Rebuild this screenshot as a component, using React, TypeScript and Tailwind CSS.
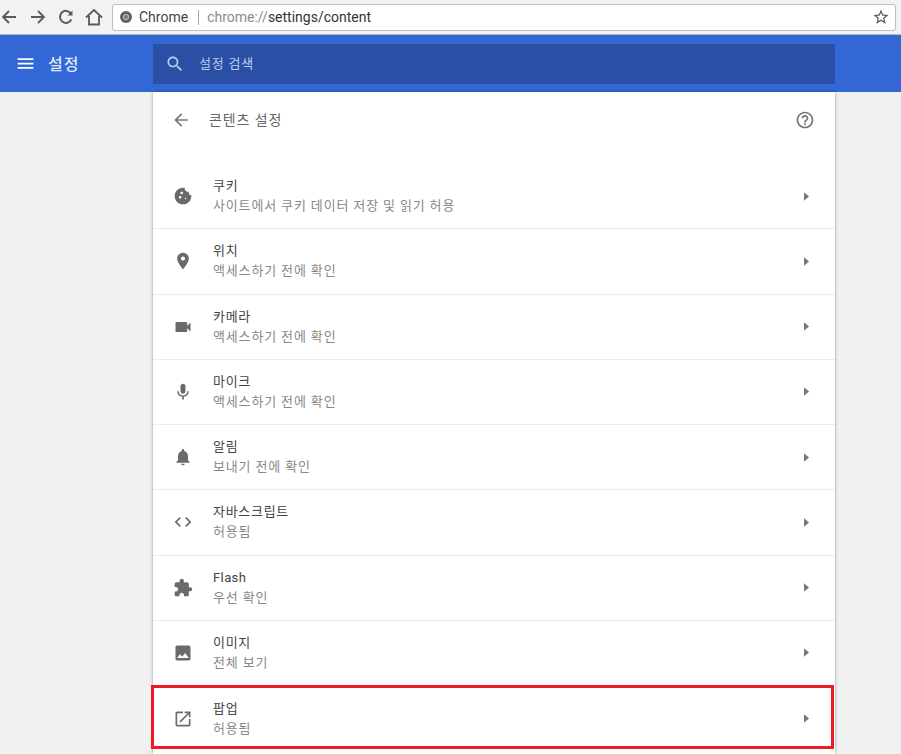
const FONT = "font-['Roboto','Noto_Sans_CJK_KR',sans-serif]";

const PATHS = {
  menu: "M3 18h18v-2H3v2zm0-5h18v-2H3v2zm0-7v2h18V6H3z",
  search:
    "M15.5 14h-.79l-.28-.27C15.41 12.59 16 11.11 16 9.5 16 5.91 13.09 3 9.5 3S3 5.91 3 9.5 5.91 16 9.5 16c1.61 0 3.09-.59 4.23-1.57l.27.28v.79l5 4.99L20.49 19l-4.99-5zm-6 0C7.01 14 5 11.99 5 9.5S7.01 5 9.5 5 14 7.01 14 9.5 11.99 14 9.5 14z",
  back: "M20 11H7.83l5.59-5.59L12 4l-8 8 8 8 1.41-1.41L7.83 13H20v-2z",
  help: "M11 18h2v-2h-2v2zm1-16C6.48 2 2 6.48 2 12s4.48 10 10 10 10-4.48 10-10S17.52 2 12 2zm0 18c-4.41 0-8-3.59-8-8s3.59-8 8-8 8 3.59 8 8-3.59 8-8 8zm0-14c-2.21 0-4 1.79-4 4h2c0-1.1.9-2 2-2s2 .9 2 2c0 2-3 1.75-3 5h2c0-2.25 3-2.5 3-5 0-2.21-1.79-4-4-4z",
  cookie:
    "M21.95 10.99c-1.79-.03-3.7-1.95-2.68-4.22-2.97 1-5.78-1.59-5.19-4.56C7.11.74 2 6.41 2 12c0 5.52 4.48 10 10 10 5.89 0 10.54-5.08 9.95-11.01zM8.5 15c-.83 0-1.5-.67-1.5-1.5S7.67 12 8.5 12s1.5.67 1.5 1.5S9.33 15 8.5 15zm2-5C9.67 10 9 9.33 9 8.5S9.67 7 10.5 7s1.5.67 1.5 1.5-.67 1.5-1.5 1.5zm4.5 6c-.55 0-1-.45-1-1s.45-1 1-1 1 .45 1 1-.45 1-1 1z",
  location:
    "M12 2C8.13 2 5 5.13 5 9c0 5.25 7 13 7 13s7-7.75 7-13c0-3.87-3.13-7-7-7zm0 9.5c-1.38 0-2.5-1.12-2.5-2.5s1.12-2.5 2.5-2.5 2.5 1.12 2.5 2.5-1.12 2.5-2.5 2.5z",
  camera:
    "M17 10.5V7c0-.55-.45-1-1-1H4c-.55 0-1 .45-1 1v10c0 .55.45 1 1 1h12c.55 0 1-.45 1-1v-3.5l4 4v-11l-4 4z",
  mic: "M12 14c1.66 0 2.99-1.34 2.99-3L15 5c0-1.66-1.34-3-3-3S9 3.34 9 5v6c0 1.66 1.34 3 3 3zm5.3-3c0 3-2.54 5.1-5.3 5.1S6.7 14 6.7 11H5c0 3.41 2.72 6.23 6 6.72V21h2v-3.28c3.28-.48 6-3.3 6-6.72h-1.7z",
  bell: "M12 22c1.1 0 2-.9 2-2h-4c0 1.1.89 2 2 2zm6-6v-5c0-3.07-1.64-5.64-4.5-6.32V4c0-.83-.67-1.5-1.5-1.5s-1.5.67-1.5 1.5v.68C7.63 5.36 6 7.92 6 11v5l-2 2v1h16v-1l-2-2z",
  code: "M9.4 16.6L4.8 12l4.6-4.6L8 6l-6 6 6 6 1.4-1.4zm5.2 0l4.6-4.6-4.6-4.6L16 6l6 6-6 6-1.4-1.4z",
  puzzle:
    "M20.5 11H19V7c0-1.1-.9-2-2-2h-4V3.5C13 2.12 11.88 1 10.5 1S8 2.12 8 3.5V5H4c-1.1 0-1.99.9-1.99 2v3.8H3.5c1.49 0 2.7 1.21 2.7 2.7s-1.21 2.7-2.7 2.7H2V20c0 1.1.9 2 2 2h3.8v-1.5c0-1.49 1.21-2.7 2.7-2.7 1.49 0 2.7 1.21 2.7 2.7V22H17c1.1 0 2-.9 2-2v-4h1.5c1.38 0 2.5-1.12 2.5-2.5S21.88 11 20.5 11z",
  image:
    "M21 19V5c0-1.1-.9-2-2-2H5c-1.1 0-2 .9-2 2v14c0 1.1.9 2 2 2h14c1.1 0 2-.9 2-2zM8.5 13.5l2.5 3.01L14.5 12l4.5 6H5l3.5-4.5z",
  popup:
    "M19 19H5V5h7V3H5c-1.11 0-2 .9-2 2v14c0 1.1.89 2 2 2h14c1.1 0 2-.9 2-2v-7h-2v7zM14 3v2h3.59l-9.83 9.83 1.41 1.41L19 6.41V10h2V3h-7z",
};

const ROWS = [
  { icon: PATHS.cookie, title: "쿠키", sub: "사이트에서 쿠키 데이터 저장 및 읽기 허용" },
  { icon: PATHS.location, title: "위치", sub: "액세스하기 전에 확인" },
  { icon: PATHS.camera, title: "카메라", sub: "액세스하기 전에 확인" },
  { icon: PATHS.mic, title: "마이크", sub: "액세스하기 전에 확인" },
  { icon: PATHS.bell, title: "알림", sub: "보내기 전에 확인" },
  { icon: PATHS.code, title: "자바스크립트", sub: "허용됨" },
  { icon: PATHS.puzzle, title: "Flash", sub: "우선 확인" },
  { icon: PATHS.image, title: "이미지", sub: "전체 보기" },
  { icon: PATHS.popup, title: "팝업", sub: "허용됨" },
];

const Icon = ({ d, className }: { d: string; className: string }) => (
  <svg viewBox="0 0 24 24" fill="currentColor" className={className}>
    <path d={d} />
  </svg>
);

const Toolbar = () => (
  <div className="flex h-[35px] items-center border-b border-[#b9b9b9] bg-[#f2f2f2] pl-[1px] pr-[5px]">
    <div className="flex w-[111px] items-center gap-[12.5px] text-[#5a5a5a]">
      <svg viewBox="0 0 16 16" className="h-4 w-4" fill="none" stroke="currentColor" strokeWidth="1.8">
        <path d="M15 8H2M8 2 2 8l6 6" />
      </svg>
      <svg viewBox="0 0 16 16" className="h-4 w-4" fill="none" stroke="currentColor" strokeWidth="1.8">
        <path d="M1 8h13M8 2l6 6-6 6" />
      </svg>
      <svg viewBox="0 0 16 16" className="h-4 w-4" fill="none" stroke="currentColor" strokeWidth="2">
        <path d="M13.4 10.4A6 6 0 1 1 13 4.6" />
        <path d="M14.5 1.5v5h-5z" fill="currentColor" stroke="none" />
      </svg>
      <svg viewBox="0 0 18 18" className="-ml-[2px] h-[18px] w-[18px]" fill="none" stroke="currentColor" strokeWidth="1.8">
        <path d="M1 9.5 9 2l8 7.5M4 8v8.5h10V8" />
      </svg>
    </div>
    <div className={`flex h-[27px] flex-1 items-center rounded-[3px] border border-[#bdbdbd] bg-white pl-[7px] pr-[5px] text-[14px] ${FONT}`}>
      <svg viewBox="0 0 12 12" className="h-3 w-3">
        <circle cx="6" cy="6" r="6" fill="#626262" />
        <circle cx="6" cy="6" r="2.7" fill="#7d7d7d" stroke="#cfcfcf" strokeWidth="0.8" />
      </svg>
      <span className="ml-[7px] text-[#444]">Chrome</span>
      <span className="ml-[10px] h-[15px] w-px bg-[#a8a8a8]" />
      <span className="ml-[8px] text-[#8a8a8a]">
        chrome://<span className="text-[#333]">settings/content</span>
      </span>
      <svg viewBox="0 0 24 24" className="ml-auto h-[18px] w-[18px] text-[#555]" fill="currentColor">
        <path d="M22 9.24l-7.19-.62L12 2 9.19 8.63 2 9.24l5.46 4.73L5.82 21 12 17.27 18.18 21l-1.63-7.03L22 9.24zM12 15.4l-3.76 2.27 1-4.28-3.32-2.88 4.38-.38L12 6.1l1.71 4.04 4.38.38-3.32 2.88 1 4.28L12 15.4z" />
      </svg>
    </div>
  </div>
);

const Header = () => (
  <div className={`flex h-[57px] items-center bg-[#3367d6] text-white ${FONT}`}>
    <div className="flex w-[153px] items-center pl-[15px]">
      <Icon d={PATHS.menu} className="h-[21px] w-[21px]" />
      <span className="ml-[12px] mt-[3px] text-[16px] font-medium tracking-[1px] text-[#dfe8fa]">설정</span>
    </div>
    <div className="flex h-10 w-[682px] items-center rounded-[2px] bg-[#2a4fa5] pl-[12px] text-[#bccdf0]">
      <Icon d={PATHS.search} className="h-[20px] w-[20px]" />
      <span className="ml-[14px] text-[13px] tracking-[0.8px]">설정 검색</span>
    </div>
  </div>
);

const Row = ({ row, last }: { row: (typeof ROWS)[number]; last: boolean }) => (
  <div className={`relative flex h-[65.25px] items-center pl-[20px] pr-[26px] ${last ? "" : "border-b border-[#ececec]"}`}>
    <Icon d={row.icon} className="h-[20px] w-[20px] shrink-0 text-[#6a6a6a]" />
    <div className="ml-[20px] flex flex-col text-[13px] leading-[20px]">
      <span className={row.title === "Flash" ? "tracking-[0.4px] text-[#444]" : "tracking-[0.7px] text-[#444]"}>{row.title}</span>
      <span className="tracking-[0.85px] text-[#888]">{row.sub}</span>
    </div>
    <svg viewBox="0 0 6 10" className="ml-auto h-[9px] w-[5px] text-[#777]" fill="currentColor">
      <path d="M0 0l6 5-6 5z" />
    </svg>
    {last && <div className="absolute bottom-[2px] left-[-2px] right-[1px] top-[-1px] border-[3px] border-[#ed1c24]" />}
  </div>
);

export default function App() {
  return (
    <div className="h-[754px] overflow-hidden bg-[#f1f1f1]">
      <Toolbar />
      <Header />
      <div className={`ml-[153px] h-[662px] w-[682px] bg-white shadow-[0_0_3px_rgba(0,0,0,0.4)] ${FONT}`}>
        <div className="flex h-[72px] items-center pl-[18px] pr-[20px] pb-[16px] text-[#757575]">
          <Icon d={PATHS.back} className="h-[20px] w-[20px]" />
          <span className="ml-[18px] text-[14px] tracking-[0.9px] text-[#666]">콘텐츠 설정</span>
          <Icon d={PATHS.help} className="ml-auto h-[20px] w-[20px]" />
        </div>
        {ROWS.map((row, i) => (
          <Row key={row.title} row={row} last={i === ROWS.length - 1} />
        ))}
      </div>
    </div>
  );
}
